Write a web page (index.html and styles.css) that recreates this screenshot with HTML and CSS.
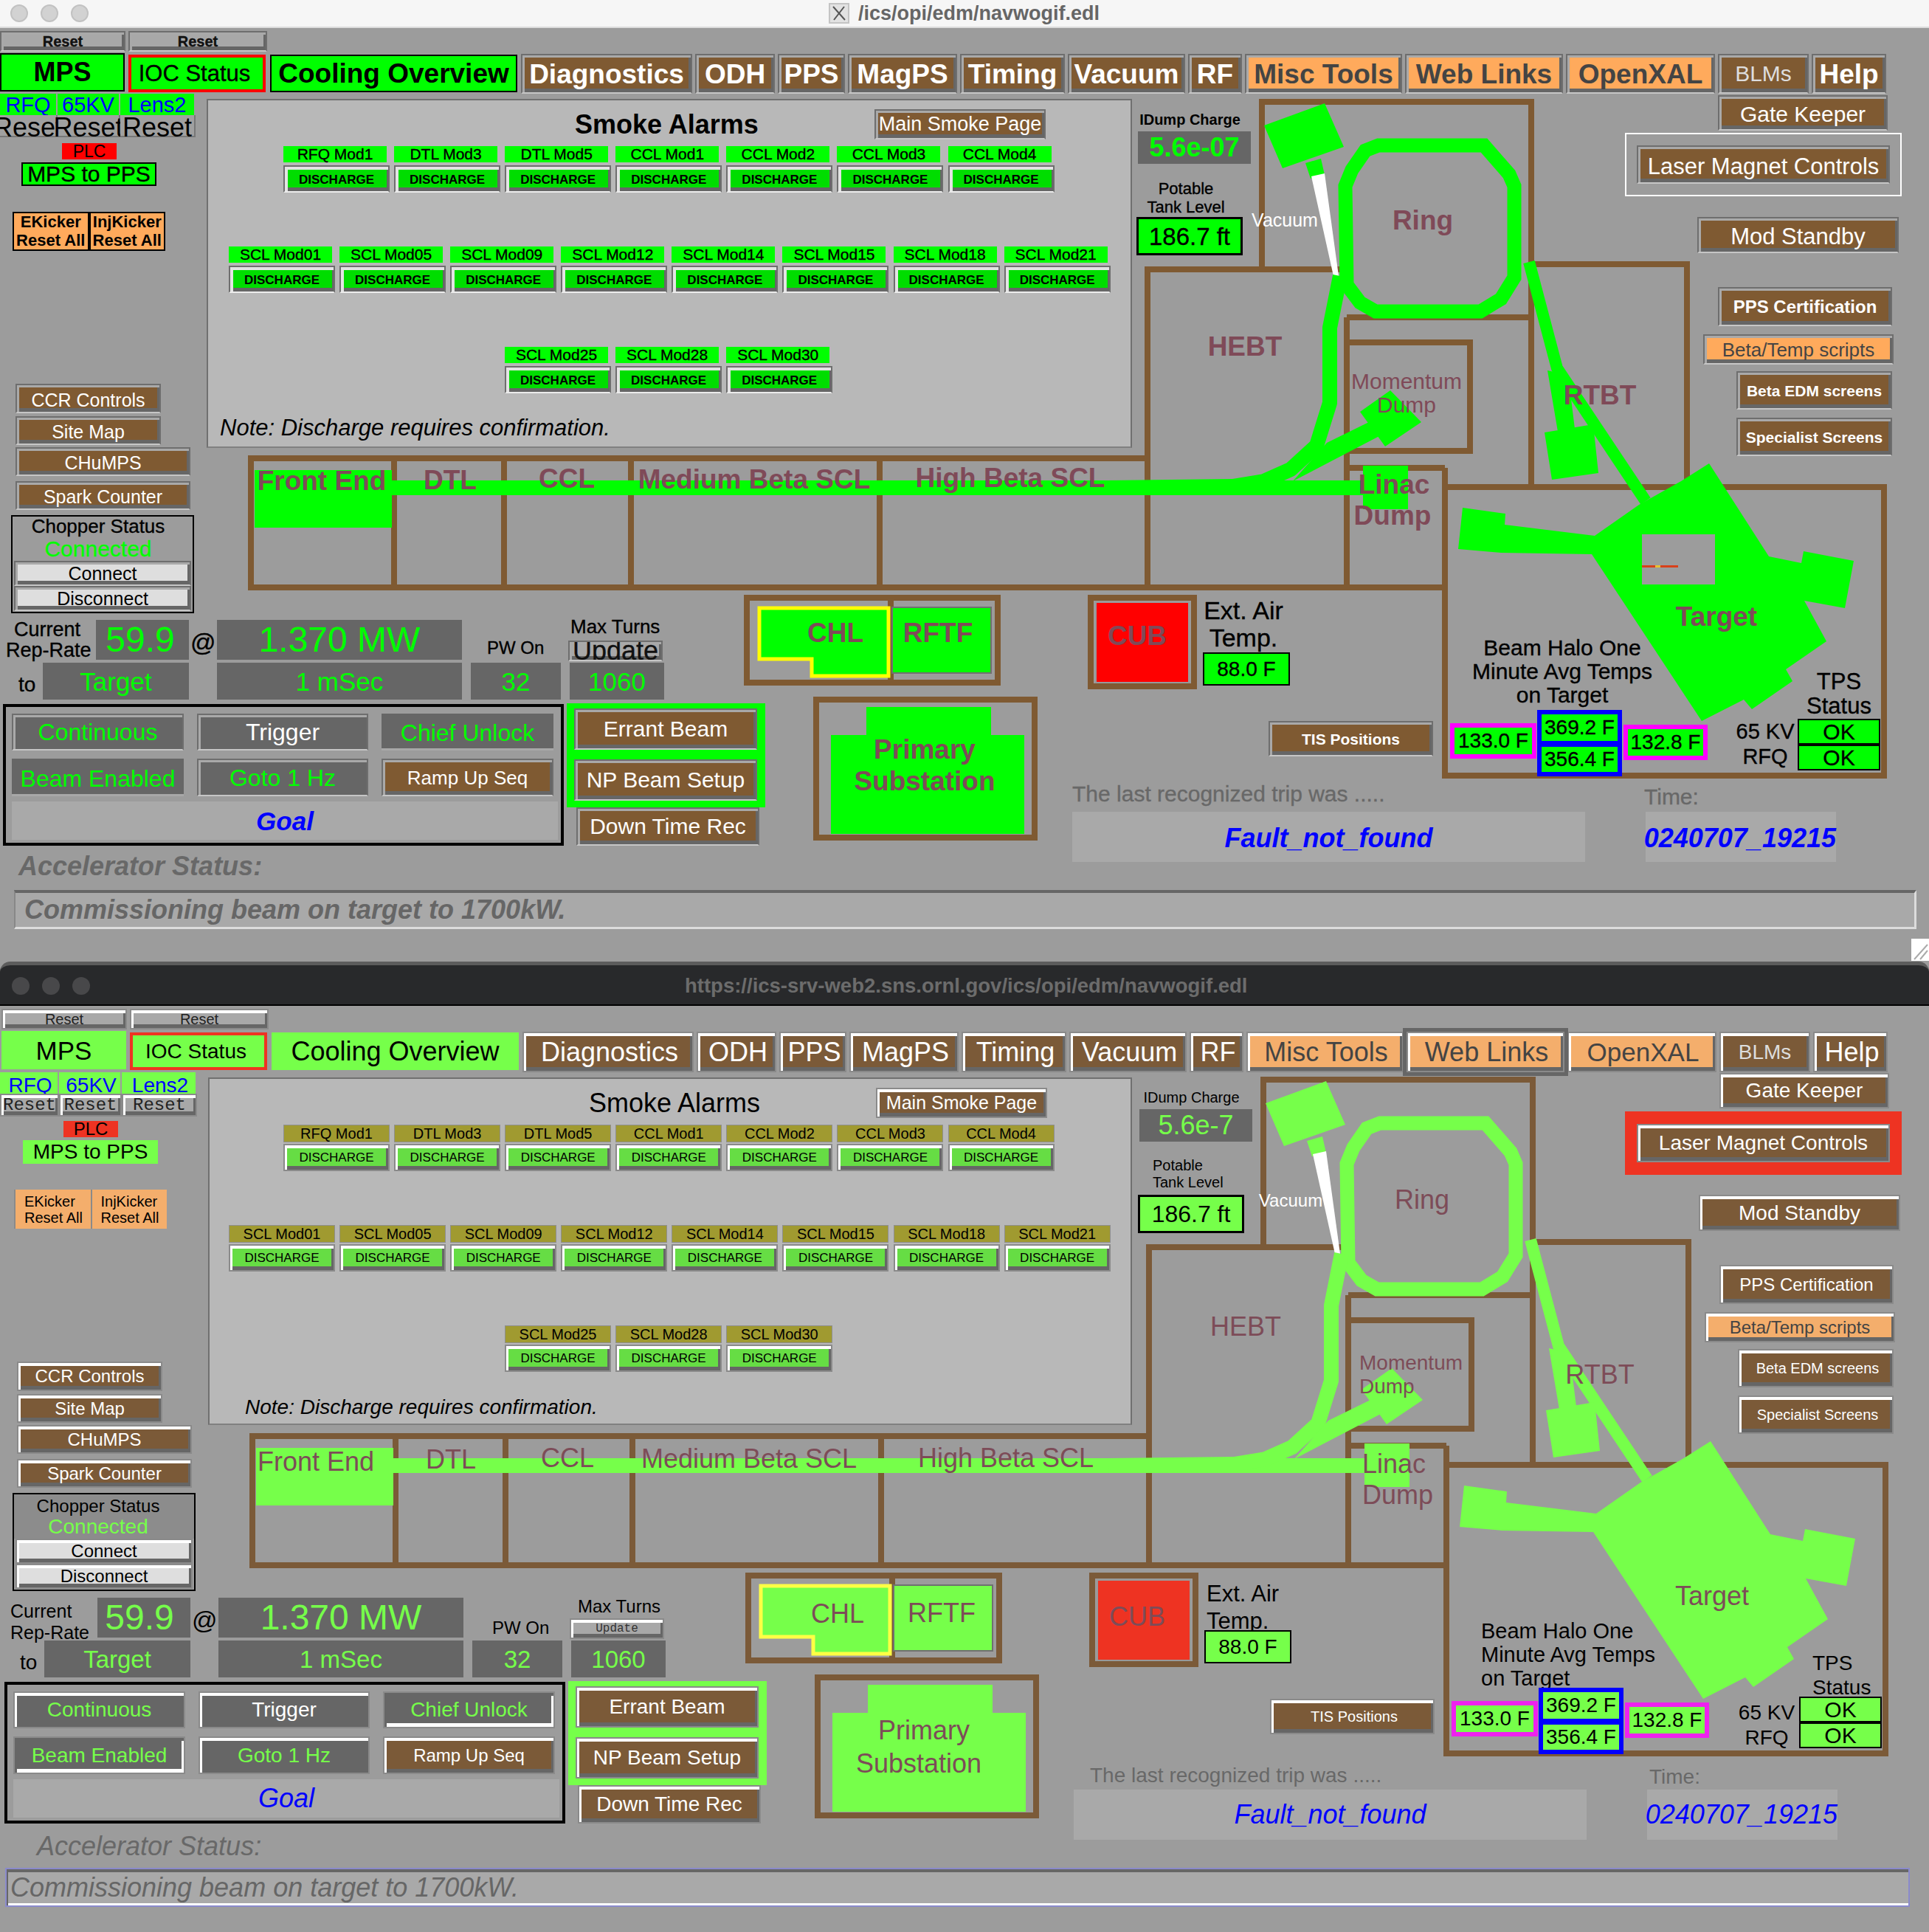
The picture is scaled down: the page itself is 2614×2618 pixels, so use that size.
FILE: index.html
```html
<!DOCTYPE html>
<html lang="en">
<head>
<meta charset="utf-8">
<title>navwogif.edl</title>
<link rel="stylesheet" href="styles.css">
</head>
<body>
<section class="win x11">
  <header class="title">
    <div class="lights"><i></i><i></i><i></i></div>
    <svg class="xicon" viewBox="0 0 28 28" width="28" height="28"><rect x="1" y="1" width="26" height="26" fill="#e2e2e2" stroke="#c4c4c4" stroke-width="2"/><path d="M6 5 L22 23 M21 5 L7 23" stroke="#555" stroke-width="2" fill="none"/></svg>
    <span class="ttext">/ics/opi/edm/navwogif.edl</span>
  </header>
  <div class="canvas">
    <div class="plane">
      <svg class="syn" viewBox="0 38 2614 1265" width="2614" height="1265">
        <g id="plant">
          <path class="ln" d="M340 621 H1555 M340 617 V800 M534 621 V796 M683 621 V796 M855 621 V796 M1192 621 V796 M336 796 H1962"/>
          <path class="ln" d="M1555 796 V365 H1825 M1710 361 V138 H2079 M2075 138 V657 M1825 430 V796 M1825 430 H2075"/>
          <path class="ln" d="M1825 464 H1992 V611 H1825 M1825 634 H1958 M1958 634 V1051 H2553 V660 H1958 M2075 358 H2286 V660"/>
          <path class="ln" d="M1012 810 H1352 V925 H1012 Z M1207 810 V925"/>
          <rect class="ln" x="1478" y="810" width="140" height="120"/>
          <rect class="ln" x="1106" y="948" width="296" height="187"/>
          <rect class="cub" x="1485" y="816" width="126" height="109"/>
          <path class="gr" d="M1174 958 H1343 V996 H1388 V1130 H1126 V996 H1174 Z"/>
          <path class="gr chl" d="M1029 824 H1204 V916 H1100 V893 H1029 Z"/>
          <rect class="gr rftf" x="1209" y="823" width="134" height="89"/>
          <rect class="gr" x="345" y="637" width="186" height="78"/>
          <rect class="gr" x="530" y="651" width="1320" height="20"/>
          <rect class="gr" x="1847" y="631" width="61" height="59"/>
          <path class="gr" d="M1713 170 L1795 140 L1821 199 L1738 228 Z M1769 221 L1790 215 L1795 237 L1776 242 Z"/>
          <path class="wh" d="M1777 239 L1795 235 L1814 374 L1807 374 Z"/>
          <path class="bm" stroke-width="19" d="M1868 197 H2011 L2045 236 L2052 252 V376 L2034 405 L2006 422 H1864 L1843 410 L1825 386 L1823 252 L1832 230 L1850 204 Z"/>
          <path class="bm" stroke-width="20" stroke-linejoin="round" d="M1816 374 L1802 444 V546 L1784 604 L1749 636 L1713 652 L1670 659 L1500 661"/>
          <path class="gr" d="M1798 600 L1855 572 L1869 591 L1752 652 Z M1843 558 L1884 529 L1926 572 L1877 605 Z"/>
          <path class="bm" stroke-width="16" d="M2072 355 L2110 499 L2230 679"/>
          <path class="gr" d="M2097 502 L2125 508 L2134 581 L2111 585 Z M2093 586 L2159 575 L2166 641 L2103 650 Z"/>
          <path class="gr" d="M2316 628 L2397 754 L2441 763 L2444 747 L2512 760 L2500 824 L2445 814 L2475 869 L2420 907 L2429 923 L2374 961 L2363 948 L2306 977 L2157 751 L2034 749 L1976 744 L1982 688 L2040 696 L2039 711 L2161 726 L2221 684 L2278 652 Z"/>
        </g>
        <rect class="tgtwin" x="2225" y="724" width="99" height="68"/>
        <path class="tick" d="M2225 767.5 H2274"/>
        <path class="tickdot" d="M2243 767.5 H2250"/>
        <text class="lbl" x="1928" y="298">Ring</text>
        <text class="lbl" x="1687" y="469">HEBT</text>
        <text class="lbl sm" x="1906" y="516">Momentum</text>
        <text class="lbl sm" x="1906" y="548">Dump</text>
        <text class="lbl" x="2168" y="535">RTBT</text>
        <text class="lbl" x="1889" y="656">Linac</text>
        <text class="lbl" x="1887" y="698">Dump</text>
        <text class="lbl" x="2326" y="835">Target</text>
        <text class="lbl" x="436" y="651">Front End</text>
        <text class="lbl" x="610" y="650">DTL</text>
        <text class="lbl" x="768" y="648">CCL</text>
        <text class="lbl" x="1022" y="649">Medium Beta SCL</text>
        <text class="lbl" x="1369" y="647">High Beta SCL</text>
        <text class="lbl" x="1132" y="857">CHL</text>
        <text class="lbl" x="1271" y="857">RFTF</text>
        <text class="lbl" x="1541" y="861">CUB</text>
        <text class="lbl" x="1253" y="1015">Primary</text>
        <text class="lbl" x="1253" y="1058">Substation</text>
        <text class="vac" x="1741" y="298">Vacuum</text>
      </svg>

      <div class="w btn grey bd t20 p-r1">Reset</div>
      <div class="w btn grey bd t20 p-r2">Reset</div>
      <div class="w gbox bd t36 p-mps">MPS</div>
      <div class="w gbox redb t31 p-ioc">IOC Status</div>
      <div class="w gbox bd t37 p-cool">Cooling Overview</div>

      <nav class="nav">
        <div class="w btn brown bd t37">Diagnostics</div>
        <div class="w btn brown bd t37">ODH</div>
        <div class="w btn brown bd t37">PPS</div>
        <div class="w btn brown bd t37">MagPS</div>
        <div class="w btn brown bd t37">Timing</div>
        <div class="w btn brown bd t37">Vacuum</div>
        <div class="w btn brown bd t37">RF</div>
        <div class="w btn orange bd t37">Misc Tools</div>
        <div class="w btn orange bd t37">Web Links</div>
        <div class="w btn orange bd t37">OpenXAL</div>
        <div class="w btn brown t30 dim">BLMs</div>
        <div class="w btn brown bd t37">Help</div>
      </nav>

      <div class="trip p-trip">
        <div class="w tcell t29">RFQ</div><div class="w tcell t29">65KV</div><div class="w tcell t29">Lens2</div>
        <div class="w trst t36">Reset</div><div class="w trst t36">Reset</div><div class="w trst t36">Reset</div>
      </div>
      <div class="w plc t23 p-plc">PLC</div>
      <div class="w gbox t30 p-mpspps">MPS to PPS</div>
      <div class="kick p-kick">
        <div class="w kcell bd t22">EKicker<br>Reset All</div>
        <div class="w kcell bd t22">InjKicker<br>Reset All</div>
      </div>

      <div class="w btn brown t25 p-ccr">CCR Controls</div>
      <div class="w btn brown t25 p-site">Site Map</div>
      <div class="w btn brown t25 p-chumps">CHuMPS</div>
      <div class="w btn brown t25 p-spark">Spark Counter</div>

      <div class="chop p-chop">
        <div class="chophead"><span class="t26">Chopper Status</span><span class="conn t30">Connected</span></div>
        <div class="w btn lightb t25">Connect</div>
        <div class="w btn lightb t25">Disconnect</div>
      </div>

      <div class="panel p-panel">
        <div class="phead">
          <span class="ptitle bd t36">Smoke Alarms</span>
          <div class="w btn brown t27 pmain">Main Smoke Page</div>
        </div>
        <div class="row r1">
          <div class="cell"><div class="w alab t21">RFQ Mod1</div><div class="w btn dis bd t17">DISCHARGE</div></div>
          <div class="cell"><div class="w alab t21">DTL Mod3</div><div class="w btn dis bd t17">DISCHARGE</div></div>
          <div class="cell"><div class="w alab t21">DTL Mod5</div><div class="w btn dis bd t17">DISCHARGE</div></div>
          <div class="cell"><div class="w alab t21">CCL Mod1</div><div class="w btn dis bd t17">DISCHARGE</div></div>
          <div class="cell"><div class="w alab t21">CCL Mod2</div><div class="w btn dis bd t17">DISCHARGE</div></div>
          <div class="cell"><div class="w alab t21">CCL Mod3</div><div class="w btn dis bd t17">DISCHARGE</div></div>
          <div class="cell"><div class="w alab t21">CCL Mod4</div><div class="w btn dis bd t17">DISCHARGE</div></div>
        </div>
        <div class="row r2">
          <div class="cell"><div class="w alab t21">SCL Mod01</div><div class="w btn dis bd t17">DISCHARGE</div></div>
          <div class="cell"><div class="w alab t21">SCL Mod05</div><div class="w btn dis bd t17">DISCHARGE</div></div>
          <div class="cell"><div class="w alab t21">SCL Mod09</div><div class="w btn dis bd t17">DISCHARGE</div></div>
          <div class="cell"><div class="w alab t21">SCL Mod12</div><div class="w btn dis bd t17">DISCHARGE</div></div>
          <div class="cell"><div class="w alab t21">SCL Mod14</div><div class="w btn dis bd t17">DISCHARGE</div></div>
          <div class="cell"><div class="w alab t21">SCL Mod15</div><div class="w btn dis bd t17">DISCHARGE</div></div>
          <div class="cell"><div class="w alab t21">SCL Mod18</div><div class="w btn dis bd t17">DISCHARGE</div></div>
          <div class="cell"><div class="w alab t21">SCL Mod21</div><div class="w btn dis bd t17">DISCHARGE</div></div>
        </div>
        <div class="row r3">
          <div class="cell"><div class="w alab t21">SCL Mod25</div><div class="w btn dis bd t17">DISCHARGE</div></div>
          <div class="cell"><div class="w alab t21">SCL Mod28</div><div class="w btn dis bd t17">DISCHARGE</div></div>
          <div class="cell"><div class="w alab t21">SCL Mod30</div><div class="w btn dis bd t17">DISCHARGE</div></div>
        </div>
        <div class="note t31">Note: Discharge requires confirmation.</div>
      </div>

      <div class="cap ctr t27 p-rep">Current<br>Rep-Rate</div>
      <div class="w rd t48 p-rate">59.9</div>
      <div class="cap t34 p-at">@</div>
      <div class="w rd t48 p-pow">1.370 MW</div>
      <div class="cap t28 p-to">to</div>
      <div class="w rd t35 p-tgt">Target</div>
      <div class="w rd t35 p-ms">1 mSec</div>
      <div class="w rd t35 p-32">32</div>
      <div class="w rd t35 p-1060">1060</div>
      <div class="cap t24 p-pw">PW On</div>
      <div class="cap t26 p-turns">Max Turns</div>
      <div class="w btn grey upd p-upd">Update</div>

      <div class="mode p-mode">
        <div class="w btn dk t32">Continuous</div>
        <div class="w btn dk wt t32">Trigger</div>
        <div class="w flat dk t32">Chief Unlock</div>
        <div class="w flat dk t32">Beam Enabled</div>
        <div class="w btn dk t32">Goto 1 Hz</div>
        <div class="w btn brown t26">Ramp Up Seq</div>
        <div class="w goal bd it t35">Goal</div>
      </div>

      <div class="gwrap p-gwrap">
        <div class="w btn brown t30">Errant Beam</div>
        <div class="w btn brown t30">NP Beam Setup</div>
      </div>
      <div class="w btn brown t30 p-down">Down Time Rec</div>

      <div class="cap grtxt bd it t36 p-acc">Accelerator Status:</div>
      <div class="comm bd it t36 p-comm">Commissioning beam on target to 1700kW.</div>

      <div class="w btn brown t30 p-gate">Gate Keeper</div>
      <div class="lasbox p-las"><div class="w btn brown t31 lasbtn">Laser Magnet Controls</div></div>
      <div class="w btn brown t31 p-mod">Mod Standby</div>
      <div class="w btn brown bd t24 p-ppsc">PPS Certification</div>
      <div class="w btn orange t26 p-beta">Beta/Temp scripts</div>
      <div class="w btn brown bd t21 p-edm">Beta EDM screens</div>
      <div class="w btn brown bd t21 p-spec">Specialist Screens</div>

      <div class="cap ctr bd t20 p-idl">IDump Charge</div>
      <div class="w rd bd t36 p-idv">5.6e-07</div>
      <div class="cap ctr t22 p-tank">Potable<br>Tank Level</div>
      <div class="w gbox bk3 t33 p-ft">186.7 ft</div>

      <div class="cap ctr t34 p-ext">Ext. Air<br>Temp.</div>
      <div class="w gbox t28 p-88">88.0 F</div>
      <div class="w btn brown bd t21 p-tis">TIS Positions</div>
      <div class="cap ctr t30 p-halo">Beam Halo One<br>Minute Avg Temps<br>on Target</div>
      <div class="w val mag t28 p-t1">133.0 F</div>
      <div class="w val blu t28 p-t2">369.2 F</div>
      <div class="w val blu t28 p-t3">356.4 F</div>
      <div class="w val mag t28 p-t4">132.8 F</div>
      <div class="cap ctr t31 p-tps">TPS<br>Status</div>
      <div class="cap ctr t29 p-kv">65 KV<br>RFQ</div>
      <div class="oks p-ok"><div class="w gbox t30">OK</div><div class="w gbox t30">OK</div></div>

      <div class="cap grtxt t30 p-last">The last recognized trip was .....</div>
      <div class="w fbox bd it t36 p-fault">Fault_not_found</div>
      <div class="cap grtxt t30 p-time">Time:</div>
      <div class="w fbox bd it t36 p-tbox">0240707_19215</div>

      <svg class="grip" viewBox="0 0 24 30" width="24" height="30"><rect width="24" height="30" fill="#fff"/><path d="M4 28 L22 8 M12 28 L22 16" stroke="#aaa" stroke-width="2"/></svg>
    </div>
  </div>
</section>

<section class="win web">
  <header class="title">
    <div class="lights"><i></i><i></i><i></i></div>
    <span class="ttext">https://ics-srv-web2.sns.ornl.gov/ics/opi/edm/navwogif.edl</span>
  </header>
  <div class="canvas">
    <div class="plane">
      <svg class="syn" viewBox="0 38 2614 1255" width="2614" height="1255">
        <use href="#plant"/>
        <text class="lbl" x="1925" y="300">Ring</text>
        <text class="lbl" x="1686" y="472">HEBT</text>
        <text class="lbl sm st" x="1840" y="521">Momentum</text>
        <text class="lbl sm st" x="1840" y="553">Dump</text>
        <text class="lbl" x="2166" y="537">RTBT</text>
        <text class="lbl st" x="1844" y="658">Linac</text>
        <text class="lbl st" x="1844" y="700">Dump</text>
        <text class="lbl" x="2318" y="837">Target</text>
        <text class="lbl" x="426" y="655">Front End</text>
        <text class="lbl" x="609" y="652">DTL</text>
        <text class="lbl" x="767" y="650">CCL</text>
        <text class="lbl" x="1013" y="651">Medium Beta SCL</text>
        <text class="lbl" x="1361" y="650">High Beta SCL</text>
        <text class="lbl" x="1133" y="861">CHL</text>
        <text class="lbl" x="1274" y="860">RFTF</text>
        <text class="lbl" x="1539" y="865">CUB</text>
        <text class="lbl" x="1250" y="1019">Primary</text>
        <text class="lbl" x="1243" y="1064">Substation</text>
        <text class="vac" x="1747" y="301">Vacuum</text>
      </svg>

      <div class="w btn grey t20 p-r1">Reset</div>
      <div class="w btn grey t20 p-r2">Reset</div>
      <div class="w gbox t35 p-mps">MPS</div>
      <div class="w gbox redb t28 p-ioc">IOC Status</div>
      <div class="w gbox t36 p-cool">Cooling Overview</div>

      <nav class="nav">
        <div class="w btn brown t36">Diagnostics</div>
        <div class="w btn brown t36">ODH</div>
        <div class="w btn brown t36">PPS</div>
        <div class="w btn brown t36">MagPS</div>
        <div class="w btn brown t36">Timing</div>
        <div class="w btn brown t36">Vacuum</div>
        <div class="w btn brown t36">RF</div>
        <div class="w btn orange t36">Misc Tools</div>
        <div class="w btn orange hl t36">Web Links</div>
        <div class="w btn orange t35">OpenXAL</div>
        <div class="w btn brown t28 dim">BLMs</div>
        <div class="w btn brown t36">Help</div>
      </nav>

      <div class="trip p-trip">
        <div class="w tcell t28">RFQ</div><div class="w tcell t28">65KV</div><div class="w tcell t28">Lens2</div>
        <div class="w btn trst t24">Reset</div><div class="w btn trst t24">Reset</div><div class="w btn trst t24">Reset</div>
      </div>
      <div class="w plc t24 p-plc">PLC</div>
      <div class="w gbox t28 p-mpspps">MPS to PPS</div>
      <div class="kick p-kick">
        <div class="w kcell t20">EKicker<br>Reset All</div>
        <div class="w kcell t20">InjKicker<br>Reset All</div>
      </div>

      <div class="w btn brown t24 p-ccr">CCR Controls</div>
      <div class="w btn brown t24 p-site">Site Map</div>
      <div class="w btn brown t24 p-chumps">CHuMPS</div>
      <div class="w btn brown t24 p-spark">Spark Counter</div>

      <div class="chop p-chop">
        <div class="chophead"><span class="t24">Chopper Status</span><span class="conn t28">Connected</span></div>
        <div class="w btn lightb t24">Connect</div>
        <div class="w btn lightb t24">Disconnect</div>
      </div>

      <div class="panel p-panel">
        <div class="phead">
          <span class="ptitle t36">Smoke Alarms</span>
          <div class="w btn brown t25 pmain">Main Smoke Page</div>
        </div>
        <div class="row r1">
          <div class="cell"><div class="w alab t20">RFQ Mod1</div><div class="w btn dis t17">DISCHARGE</div></div>
          <div class="cell"><div class="w alab t20">DTL Mod3</div><div class="w btn dis t17">DISCHARGE</div></div>
          <div class="cell"><div class="w alab t20">DTL Mod5</div><div class="w btn dis t17">DISCHARGE</div></div>
          <div class="cell"><div class="w alab t20">CCL Mod1</div><div class="w btn dis t17">DISCHARGE</div></div>
          <div class="cell"><div class="w alab t20">CCL Mod2</div><div class="w btn dis t17">DISCHARGE</div></div>
          <div class="cell"><div class="w alab t20">CCL Mod3</div><div class="w btn dis t17">DISCHARGE</div></div>
          <div class="cell"><div class="w alab t20">CCL Mod4</div><div class="w btn dis t17">DISCHARGE</div></div>
        </div>
        <div class="row r2">
          <div class="cell"><div class="w alab t20">SCL Mod01</div><div class="w btn dis t17">DISCHARGE</div></div>
          <div class="cell"><div class="w alab t20">SCL Mod05</div><div class="w btn dis t17">DISCHARGE</div></div>
          <div class="cell"><div class="w alab t20">SCL Mod09</div><div class="w btn dis t17">DISCHARGE</div></div>
          <div class="cell"><div class="w alab t20">SCL Mod12</div><div class="w btn dis t17">DISCHARGE</div></div>
          <div class="cell"><div class="w alab t20">SCL Mod14</div><div class="w btn dis t17">DISCHARGE</div></div>
          <div class="cell"><div class="w alab t20">SCL Mod15</div><div class="w btn dis t17">DISCHARGE</div></div>
          <div class="cell"><div class="w alab t20">SCL Mod18</div><div class="w btn dis t17">DISCHARGE</div></div>
          <div class="cell"><div class="w alab t20">SCL Mod21</div><div class="w btn dis t17">DISCHARGE</div></div>
        </div>
        <div class="row r3">
          <div class="cell"><div class="w alab t20">SCL Mod25</div><div class="w btn dis t17">DISCHARGE</div></div>
          <div class="cell"><div class="w alab t20">SCL Mod28</div><div class="w btn dis t17">DISCHARGE</div></div>
          <div class="cell"><div class="w alab t20">SCL Mod30</div><div class="w btn dis t17">DISCHARGE</div></div>
        </div>
        <div class="note t28">Note: Discharge requires confirmation.</div>
      </div>

      <div class="cap t25 p-rep">Current<br>Rep-Rate</div>
      <div class="w rd t48 p-rate">59.9</div>
      <div class="cap t34 p-at">@</div>
      <div class="w rd t48 p-pow">1.370 MW</div>
      <div class="cap t28 p-to">to</div>
      <div class="w rd t33 p-tgt">Target</div>
      <div class="w rd t33 p-ms">1 mSec</div>
      <div class="w rd t33 p-32">32</div>
      <div class="w rd t33 p-1060">1060</div>
      <div class="cap t24 p-pw">PW On</div>
      <div class="cap t24 p-turns">Max Turns</div>
      <div class="w btn grey upd p-upd">Update</div>

      <div class="mode p-mode">
        <div class="w btn dk t28">Continuous</div>
        <div class="w btn dk wt t28">Trigger</div>
        <div class="w btn sunk dk t28">Chief Unlock</div>
        <div class="w btn sunk dk t28">Beam Enabled</div>
        <div class="w btn dk t28">Goto 1 Hz</div>
        <div class="w btn brown t24">Ramp Up Seq</div>
        <div class="w goal it t36">Goal</div>
      </div>

      <div class="gwrap p-gwrap">
        <div class="w btn brown t28">Errant Beam</div>
        <div class="w btn brown t28">NP Beam Setup</div>
      </div>
      <div class="w btn brown t28 p-down">Down Time Rec</div>

      <div class="cap grtxt it t36 p-acc">Accelerator Status:</div>
      <div class="comm it t36 p-comm">Commissioning beam on target to 1700kW.</div>

      <div class="w btn brown t28 p-gate">Gate Keeper</div>
      <div class="lasbox p-las"><div class="w btn brown t28 lasbtn">Laser Magnet Controls</div></div>
      <div class="w btn brown t28 p-mod">Mod Standby</div>
      <div class="w btn brown t24 p-ppsc">PPS Certification</div>
      <div class="w btn orange t24 p-beta">Beta/Temp scripts</div>
      <div class="w btn brown t20 p-edm">Beta EDM screens</div>
      <div class="w btn brown t20 p-spec">Specialist Screens</div>

      <div class="cap ctr t20 p-idl">IDump Charge</div>
      <div class="w rd t36 p-idv">5.6e-7</div>
      <div class="cap t20 p-tank">Potable<br>Tank Level</div>
      <div class="w gbox bk3 t32 p-ft">186.7 ft</div>

      <div class="cap t31 p-ext">Ext. Air<br>Temp.</div>
      <div class="w gbox t28 p-88">88.0 F</div>
      <div class="w btn brown t20 p-tis">TIS Positions</div>
      <div class="cap t29 p-halo">Beam Halo One<br>Minute Avg Temps<br>on Target</div>
      <div class="w val mag t28 p-t1">133.0 F</div>
      <div class="w val blu t28 p-t2">369.2 F</div>
      <div class="w val blu t28 p-t3">356.4 F</div>
      <div class="w val mag t28 p-t4">132.8 F</div>
      <div class="cap t28 p-tps">TPS<br>Status</div>
      <div class="cap ctr t28 p-kv">65 KV<br>RFQ</div>
      <div class="oks p-ok"><div class="w gbox t30">OK</div><div class="w gbox t30">OK</div></div>

      <div class="cap grtxt t28 p-last">The last recognized trip was .....</div>
      <div class="w fbox it t36 p-fault">Fault_not_found</div>
      <div class="cap grtxt t28 p-time">Time:</div>
      <div class="w fbox it t36 p-tbox">0240707_19215</div>
    </div>
  </div>
</section>
</body>
</html>
```
FILE: styles.css
```css
* { box-sizing: border-box; }
html, body { margin: 0; padding: 0; }
body { width: 2614px; height: 2618px; overflow: hidden; background: #9c9c9c; font-family: "Liberation Sans", Arial, sans-serif; color: #000; }

.x11 { --green: #00ff00; --brown: #7f5a32; --orange: #ffaa5c; --red: #ff0000; --lbl: #7f4a58; --dis: #00dd00; --alab: #00ff00; --yellow: #ffff00; }
.web { --green: #76ff4a; --brown: #7b5a38; --orange: #f4ae6c; --red: #ee3322; --lbl: #7d4c58; --dis: #66dd44; --alab: #a09a30; --yellow: #ffff44; }

.t17 { font-size: 17px; } .t20 { font-size: 20px; } .t21 { font-size: 21px; } .t22 { font-size: 22px; }
.t23 { font-size: 23px; } .t24 { font-size: 24px; } .t25 { font-size: 25px; } .t26 { font-size: 26px; }
.t27 { font-size: 27px; } .t28 { font-size: 28px; } .t29 { font-size: 29px; } .t30 { font-size: 30px; }
.t31 { font-size: 31px; } .t32 { font-size: 32px; } .t33 { font-size: 33px; } .t34 { font-size: 34px; }
.t35 { font-size: 35px; } .t36 { font-size: 36px; } .t37 { font-size: 37px; } .t48 { font-size: 48px; }
.bd { font-weight: 700; }
.it { font-style: italic; }

/* window chrome */
.title { display: flex; align-items: center; }
.x11 .title { height: 38px; background: #f6f6f6; padding-left: 14px; border-bottom: 2px solid #dcdcdc; }
.web .title { height: 60px; background: #28292b; padding: 2px 0 0 16px; border-top: 5px solid #5c5c5c; border-bottom: 2px solid #000; border-radius: 14px 14px 0 0; }
.lights { display: flex; gap: 17px; }
.lights i { display: block; width: 24px; height: 24px; border-radius: 50%; }
.x11 .lights i { background: #d2d2d2; border: 2px solid #c2c2c2; }
.web .lights i { background: #48484a; }
.x11 .xicon { margin-left: 1003px; }
.x11 .ttext { margin-left: 12px; font-size: 27px; font-weight: 700; color: #666; }
.web .ttext { margin-left: 806px; font-size: 27.5px; font-weight: 700; color: #6c6c6c; }

.canvas { position: relative; overflow: hidden; background: #9c9c9c; }
.x11 .canvas { height: 1265px; }
.web .canvas { height: 1255px; }
.plane { position: absolute; top: 0; left: 0; width: 2614px; height: 100%; }
.web .plane { left: 2px; }
.plane > * { position: absolute; }
.syn { left: 0; top: 0; }

/* plant drawing */
.ln { fill: none; stroke: var(--brown); stroke-width: 8; }
.gr { fill: var(--green); }
.bm { fill: none; stroke: var(--green); }
.wh { fill: #fff; }
.cub { fill: var(--red); stroke: #999; stroke-width: 2; }
.chl { stroke: var(--yellow); stroke-width: 5; }
.rftf { stroke: #707070; stroke-width: 2; }
.tgtwin { fill: #9c9c9c; }
.tick { stroke: #d8401a; stroke-width: 3; }
.tickdot { stroke: #e8c030; stroke-width: 3; }
.lbl { fill: var(--lbl); font-size: 37px; text-anchor: middle; dominant-baseline: central; }
.x11 .lbl { font-weight: 700; }
.web .lbl { font-size: 36px; }
.lbl.sm { font-weight: 400; font-size: 30px; }
.web .lbl.sm { font-size: 28px; }
.lbl.st { text-anchor: start; }
.vac { fill: #fff; font-size: 25px; text-anchor: middle; dominant-baseline: central; }
.web .vac { font-size: 24px; }

/* shared widgets */
.w { display: flex; align-items: center; justify-content: center; text-align: center; white-space: nowrap; line-height: 1; }
.cap { white-space: nowrap; line-height: 1.2; }
.ctr { text-align: center; }
.x11 .cap, .x11 .alab, .x11 .chophead, .x11 .gbox, .x11 .val, .x11 .grey { -webkit-text-stroke: .35px; }
.x11 .cap.bd, .x11 .gbox.bd { -webkit-text-stroke: 0; }
.btn { color: #000; }
.x11 .btn { border: 2px solid #6e6e6e; border-bottom-color: #c6c6c6; box-shadow: inset 3px 3px 0 #a9a9a9, inset -3px -5px 0 #666; }
.web .btn { border: 2px solid #8a8a8a; box-shadow: inset 3px 4px 0 #fff, inset -3px -5px 0 #666; }
.web .btn.sunk { box-shadow: inset 3px 4px 0 #666, inset -3px -5px 0 #fff; }
.brown { background: var(--brown); color: #fff !important; }
.dim { color: #ddd !important; }
.orange { background: var(--orange); color: #444 !important; }
.grey { background: #a8a8a8; }
.x11 .grey { color: #111; }
.web .grey { color: #222; }
.lightb { background: #dedede; }
.dk { background: #666; color: var(--green) !important; }
.dk.wt { color: #fff !important; }
.flat { border-bottom: 3px solid #a8a8a8; padding-top: 5px; }
.gbox { background: var(--green); }
.x11 .gbox { border: 2px solid #000; }
.web .gbox { border: 0; }
.redb { border: 4px solid var(--red) !important; padding-right: 7px; }
.web .bk3, .web .p-88, .web .oks .gbox { border: 2px solid #000; }
.bk3 { border-width: 3px !important; }
.rd { background: #666; color: var(--green); }
.grtxt { color: #686868; }
.val { background: var(--green); }
.mag { border: 6px solid #ff00ff; }
.web .mag { border-color: #ee22ee; }
.blu { border: 6px solid #0000ff; }
.fbox { background: #a9a9a9; color: #0000ff; }
.x11 .fbox { padding-top: 4px; }
.plc { background: var(--red); }
.upd { font-size: 36px; line-height: 1; overflow: hidden; }
.web .upd { font-family: "Liberation Mono", monospace; font-size: 16px; color: #333; }

/* positions on the EDM screen */
.p-r1 { left: 0; top: 4px; width: 170px; height: 28px; }
.p-r2 { left: 174px; top: 4px; width: 188px; height: 28px; }
.p-mps { left: 0; top: 34px; width: 169px; height: 52px; }
.p-ioc { left: 174px; top: 36px; width: 186px; height: 51px; }
.p-cool { left: 366px; top: 36px; width: 335px; height: 51px; }
.nav { left: 706px; top: 35px; height: 54px; display: grid; grid-template-columns: 232px 108px 91px 148px 142px 159px 73px 213px 214px 202px 123px 101px; column-gap: 4px; }
.web .nav { top: 35px; height: 55px; }
.web .nav .brown { padding-left: 4px; }
.web .nav .orange { padding-left: 3px; }
.web .nav .dim { padding-left: 0; }
.hl { outline: 5px solid #666; z-index: 2; }
.p-trip { left: 0; top: 89px; width: 265px; display: grid; grid-template-columns: 78px 85px 102px; grid-template-rows: 29px 30px; }
.web .p-trip { left: -2px; top: 90px; grid-template-columns: 80px 85px 102px; grid-template-rows: 29px 31px; }
.tcell { background: var(--green); color: #0000ff; border-right: 2px solid #9c9c9c; padding-top: 2px; }
.web .tcell { padding: 4px 0 0 4px; align-items: flex-start; }
.x11 .trst { background: #a0a0a0; border-bottom: 2px solid #777; border-right: 2px solid #777; padding-top: 6px; }
.web .trst { background: #a8a8a8; color: #222; font-family: "Liberation Mono", monospace; }
.p-plc { left: 84px; top: 156px; width: 74px; height: 22px; }
.p-mpspps { left: 29px; top: 182px; width: 183px; height: 32px; }
.p-kick { left: 17px; top: 249px; width: 207px; height: 53px; display: flex; }
.kcell { flex: 1; background: var(--orange); line-height: 1.1; }
.x11 .kcell { border: 2px solid #000; }
.web .kcell { justify-content: flex-start; text-align: left; padding-left: 12px; border-left: 2px solid #8a8a8a; }
.p-ccr { left: 21px; top: 482px; width: 197px; height: 40px; }
.p-site { left: 21px; top: 526px; width: 197px; height: 39px; }
.p-chumps { left: 21px; top: 568px; width: 237px; height: 39px; }
.p-spark { left: 21px; top: 614px; width: 237px; height: 39px; }
.x11 .p-ccr, .x11 .p-site, .x11 .p-chumps, .x11 .p-spark, .x11 .p-gate, .x11 .lasbtn, .x11 .p-mod { padding-top: 4px; }
.p-chop { left: 15px; top: 660px; width: 248px; height: 133px; border: 2px solid #000; padding: 0 2px; display: flex; flex-direction: column; }
.chophead { height: 60px; display: flex; flex-direction: column; align-items: center; gap: 1px; line-height: 1.05; margin-left: -12px; }
.web .chophead { background: #8c8c8c; margin: 0 -2px; padding: 3px 16px 0 0; }
.conn { color: var(--green); }
.chop .btn { height: 34px; flex: none; }

.p-panel { left: 280px; top: 96px; width: 1254px; height: 473px; background: #b8b8b8; border: 2px solid #707070; border-bottom-color: #808080; display: flex; flex-direction: column; }
.web .p-panel { left: 280px; top: 97px; width: 1252px; height: 471px; }
.phead { display: flex; align-items: center; padding-top: 12px; height: 53px; }
.ptitle { margin-left: 497px; width: 406px; line-height: 1; }
.web .ptitle { margin-left: 514px; width: 389px; }
.pmain { width: 232px; height: 41px; }
.row { display: flex; gap: 6.1px; }
.r1 { margin: 9px 0 0 102px; }
.r2 { margin: 73px 0 0 28px; }
.r3 { margin: 73px 0 0 402px; }
.web .r1 { margin-left: 100px; }
.web .r2 { margin-left: 26px; }
.web .r3 { margin-left: 400px; }
.cell { width: 144px; display: flex; flex-direction: column; gap: 4px; }
.web .cell { gap: 2px; }
.alab { width: 140px; height: 22px; background: var(--alab); }
.x11 .alab { padding-bottom: 2px; }
.web .alab { width: 144px; height: 24px; border: 1px solid #8e8e8e; }
.dis { height: 37px; background: var(--dis); }
.x11 .dis { border-bottom-color: #ececec; box-shadow: inset 4px 4px 0 #e4e4e4, inset -2px -5px 0 #666; padding-top: 2px; }
.note { margin: 30px 0 0 16px; font-style: italic; white-space: nowrap; line-height: 1.1; }
.web .note { margin: 33px 0 0 48px; }

.p-rep { left: 8px; top: 801px; width: 112px; line-height: 28px; }
.web .p-rep { left: 12px; top: 806px; width: auto; line-height: 29px; }
.p-rate { left: 130px; top: 802px; width: 126px; height: 54px; padding-right: 6px; }
.web .p-rate { padding-right: 12px; }
.p-at { left: 258px; top: 812px; }
.p-pow { left: 294px; top: 802px; width: 332px; height: 54px; }
.p-to { left: 25px; top: 873px; }
.p-tgt { left: 58px; top: 860px; width: 198px; height: 50px; }
.p-ms { left: 294px; top: 860px; width: 332px; height: 50px; }
.p-32 { left: 638px; top: 860px; width: 122px; height: 50px; }
.p-1060 { left: 772px; top: 860px; width: 128px; height: 50px; }
.p-pw { left: 660px; top: 826px; }
.p-turns { left: 773px; top: 796px; }
.web .p-turns { left: 781px; top: 800px; }
.web .p-pw { left: 665px; top: 829px; }
.p-upd { left: 770px; top: 830px; width: 128px; height: 28px; }

.p-mode { left: 4px; top: 916px; width: 760px; height: 192px; border: 4px solid #000; padding: 9px 0 0 8px; display: grid; grid-template-columns: 233px 232px 233px; grid-template-rows: 50px 51px 48px; gap: 11px 18px; align-content: start; }
.goal { grid-column: 1 / span 3; width: 740px; background: #a9a9a9; color: #0000ff; margin-top: -4px; }

.p-gwrap { left: 768px; top: 915px; width: 269px; height: 141px; background: var(--green); padding: 7px 0 0 10px; display: flex; flex-direction: column; gap: 13px; }
.gwrap .btn { width: 248px; height: 56px; flex: none; }
.p-down { left: 781px; top: 1056px; width: 248px; height: 52px; }

.p-acc { left: 25px; top: 1114px; }
.web .p-acc { left: 48px; top: 1117px; }
.p-comm { left: 19px; top: 1168px; width: 2578px; height: 53px; background: #a9a9a9; color: #666; border-style: solid; border-width: 4px 3px 3px 2px; border-color: #666 #dcdcdc #dcdcdc #888; padding-left: 12px; display: flex; align-items: center; white-space: nowrap; }
.web .p-comm { left: 5px; width: 2581px; border: 2px solid #8a8acc; padding-left: 5px; box-shadow: inset 2px 4px 0 #666, inset 0 -3px 0 #fff; }

.p-gate { left: 2328px; top: 91px; width: 230px; height: 48px; }
.p-las { left: 2202px; top: 142px; width: 375px; height: 86px; display: flex; align-items: center; justify-content: center; }
.x11 .p-las { border: 2px solid #fff; }
.web .p-las { background: var(--red); left: 2200px; top: 143px; }
.lasbtn { width: 343px; height: 52px; }
.p-mod { left: 2300px; top: 256px; width: 273px; height: 49px; }
.p-ppsc { left: 2328px; top: 351px; width: 236px; height: 53px; }
.p-beta { left: 2308px; top: 415px; width: 258px; height: 41px; }
.p-edm { left: 2353px; top: 465px; width: 211px; height: 52px; }
.p-spec { left: 2353px; top: 528px; width: 211px; height: 52px; }
.web .p-edm, .web .p-spec, .web .p-tis { padding-left: 5px; }

.p-idl { left: 1542px; top: 112px; width: 141px; }
.p-idv { left: 1542px; top: 140px; width: 153px; height: 44px; }
.p-tank { left: 1537px; top: 205px; width: 140px; line-height: 25px; }
.web .p-tank { left: 1560px; top: 205px; width: auto; line-height: 23px; }
.p-ft { left: 1540px; top: 256px; width: 144px; height: 52px; }
.p-ext { left: 1625px; top: 771px; width: 120px; line-height: 37px; }
.web .p-ext { left: 1633px; top: 778px; width: auto; }
.p-88 { left: 1630px; top: 846px; width: 118px; height: 45px; }
.p-tis { left: 1719px; top: 939px; width: 223px; height: 48px; }
.p-halo { left: 1970px; top: 824px; width: 294px; line-height: 32px; }
.web .p-halo { left: 2005px; top: 831px; width: auto; }
.p-t1 { left: 1965px; top: 942px; width: 117px; height: 48px; }
.p-t2 { left: 2083px; top: 924px; width: 115px; height: 48px; }
.p-t3 { left: 2083px; top: 968px; width: 115px; height: 46px; }
.p-t4 { left: 2200px; top: 944px; width: 114px; height: 48px; }
.p-tps { left: 2442px; top: 869px; width: 100px; line-height: 33px; }
.web .p-tps { left: 2454px; top: 874px; width: auto; }
.p-kv { left: 2342px; top: 936px; width: 100px; line-height: 34px; }
.web .p-kv { top: 941px; }
.p-ok { left: 2436px; top: 936px; width: 112px; height: 70px; display: flex; flex-direction: column; }
.oks .gbox { flex: 1; }

.p-last { left: 1453px; top: 1020px; }
.web .p-last { left: 1475px; top: 1026px; }
.p-fault { left: 1453px; top: 1062px; width: 695px; height: 68px; }
.p-time { left: 2228px; top: 1024px; }
.web .p-time { left: 2233px; top: 1028px; }
.p-tbox { left: 2230px; top: 1062px; width: 258px; height: 68px; justify-content: flex-end; }
.grip { left: 2590px; top: 1234px; }
```
